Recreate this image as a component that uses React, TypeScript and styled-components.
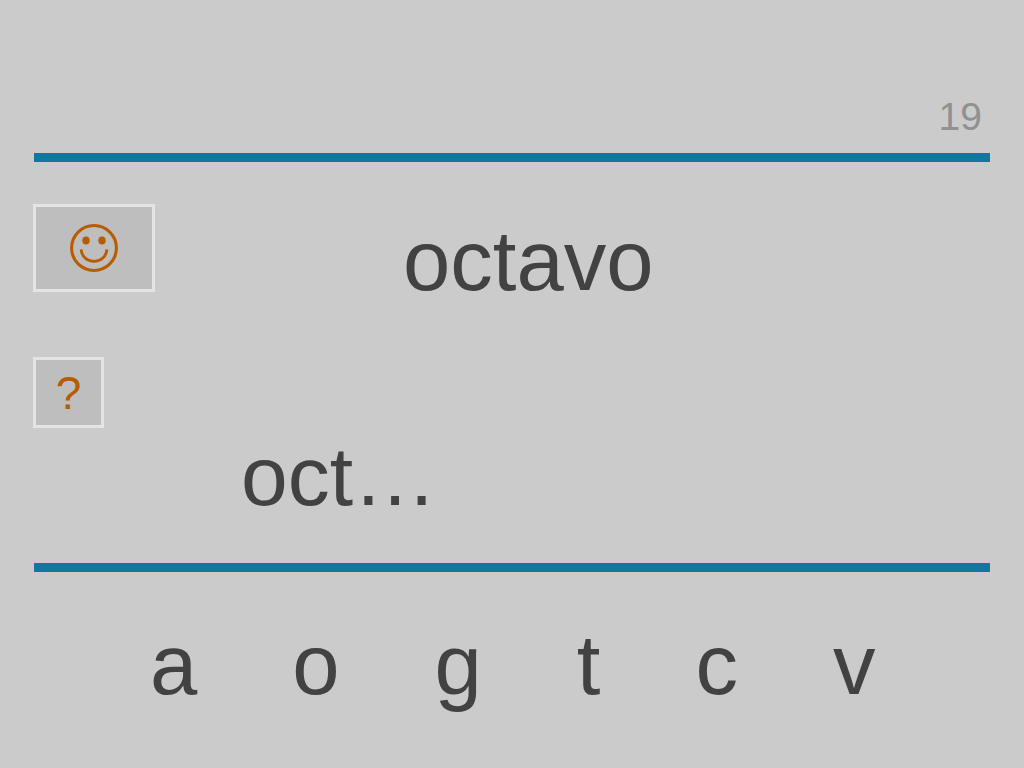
import React from "react";
import styled, { createGlobalStyle } from "styled-components";

const GlobalStyle = createGlobalStyle`
  * { box-sizing: border-box; }
  body {
    margin: 0;
    background: #cbcbcb;
    color: #424242;
    font-family: "Liberation Sans", Arial, sans-serif;
  }
`;

const Page = styled.div`
  min-height: 100vh;
  padding: 0 33px;
  display: flex;
  flex-direction: column;
`;

const Header = styled.header`
  padding: 94px 9px 13px;
  display: flex;
  justify-content: flex-end;
  color: #919191;
  font-size: 39px;
  line-height: 46px;
`;

const Rule = styled.hr`
  align-self: stretch;
  height: 9px;
  margin: 0 1px;
  border: 0;
  background: #12779c;
`;

const Board = styled.main`
  padding: 42px 0 39px;
  display: flex;
  flex-direction: column;
`;

const WordRow = styled.div`
  padding-bottom: 48px;
  display: flex;
  align-items: flex-start;
`;

const Tile = styled.button<{ $width: number; $height: number }>`
  width: ${(p) => p.$width}px;
  height: ${(p) => p.$height}px;
  padding: 0;
  display: flex;
  align-items: center;
  justify-content: center;
  border: 3px solid #e4e4e4;
  background: #bebebe;
  color: #b85c00;
  font: 46px/52px "Liberation Sans", Arial, sans-serif;
`;

const Word = styled.p`
  margin: 9px 0 0 248px;
  font-size: 85px;
  line-height: 96px;
`;

const Guess = styled.p`
  margin: 0 0 0 208px;
  font-size: 84px;
  line-height: 96px;
`;

const Letters = styled.nav`
  padding: 45px 0 24px 117px;
  display: flex;
  gap: 95px;
`;

const Letter = styled.button`
  padding: 0;
  border: 0;
  background: none;
  color: inherit;
  font: 85px/96px "Liberation Sans", Arial, sans-serif;
`;

const Smiley = () => (
  <svg width="50" height="50" viewBox="0 0 50 50" aria-hidden="true">
    <circle cx="25" cy="25" r="22.4" fill="none" stroke="#b85c00" strokeWidth="3" />
    <ellipse cx="17" cy="17.4" rx="3.7" ry="4" fill="#b85c00" />
    <ellipse cx="33" cy="17.4" rx="3.7" ry="4" fill="#b85c00" />
    <path
      d="M12.1 26.3 C12.6 33.5 18 38.4 25 38.4 C32 38.4 37.4 33.5 37.9 26.3"
      fill="none"
      stroke="#b85c00"
      strokeWidth="2.8"
    />
  </svg>
);

const letters = ["a", "o", "g", "t", "c", "v"];

export default function App() {
  return (
    <Page>
      <GlobalStyle />
      <Header>19</Header>
      <Rule />
      <Board>
        <WordRow>
          <Tile $width={122} $height={88} aria-label="Smile"><Smiley /></Tile>
          <Word>octavo</Word>
        </WordRow>
        <Tile $width={71} $height={71}>?</Tile>
        <Guess>oct…</Guess>
      </Board>
      <Rule />
      <Letters>
        {letters.map((l) => <Letter key={l}>{l}</Letter>)}
      </Letters>
    </Page>
  );
}
